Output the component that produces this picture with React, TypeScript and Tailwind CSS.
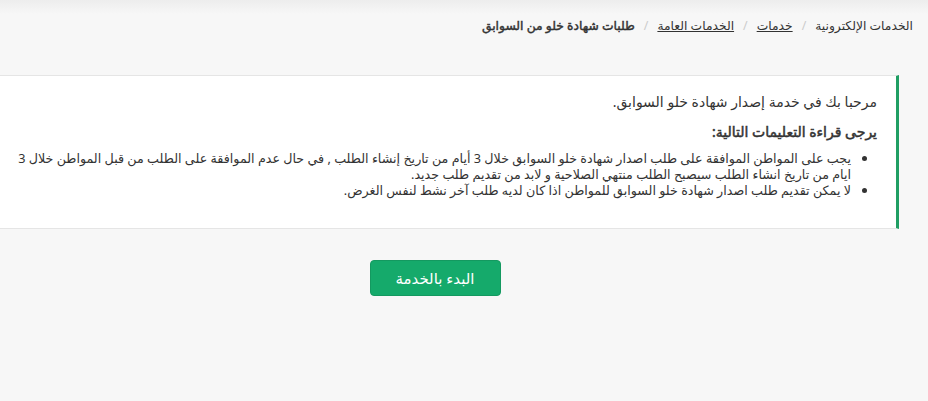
import React from 'react';

const crumbs = [
  { label: 'الخدمات الإلكترونية', link: false },
  { label: 'خدمات', link: true },
  { label: 'الخدمات العامة', link: true },
];

export default function App() {
  return (
    <div
      dir="rtl"
      className="w-[928px] h-[401px] overflow-hidden bg-[#f7f7f7] text-[#333]"
      style={{ fontFamily: '"Noto Sans", "DejaVu Sans", sans-serif' }}
    >
      {/* Breadcrumb */}
      <div className="h-[75px] pr-[15px] pt-[16px] bg-[linear-gradient(#ededed,#f7f7f7_14px)]">
        <ol className="flex items-center text-[12.3px] leading-[20px]">
          {crumbs.map((c) => (
            <li key={c.label} className="flex items-center">
              <span className={c.link ? 'underline' : ''}>{c.label}</span>
              <span className="px-[9px] text-[#ccc]">/</span>
            </li>
          ))}
          <li className="[-webkit-text-stroke:0.45px_#333]">طلبات شهادة خلو من السوابق</li>
        </ol>
      </div>

      {/* Instructions panel */}
      <div className="mr-[29px] bg-white border-t border-b border-[#e5e5e5] border-r-[3px] border-r-[#1f9e63] pr-[19px] pl-[8px] pt-[14px] pb-[30px]">
        <p className="text-[14px] leading-[24px]">مرحبا بك في خدمة إصدار شهادة خلو السوابق.</p>
        <p className="mt-[6px] text-[14px] leading-[24px] [-webkit-text-stroke:0.5px_#333]">يرجى قراءة التعليمات التالية:</p>
        <ul className="mt-[6px] list-disc pr-[26px] text-[12.7px] leading-[16px]">
          <li>
            يجب على المواطن الموافقة على طلب اصدار شهادة خلو السوابق خلال 3 أيام من تاريخ إنشاء الطلب , في حال عدم الموافقة على الطلب من قبل المواطن خلال 3 ايام من تاريخ انشاء الطلب سيصبح الطلب منتهي الصلاحية و لابد من تقديم طلب جديد.
          </li>
          <li>لا يمكن تقديم طلب اصدار شهادة خلو السوابق للمواطن اذا كان لديه طلب آخر نشط لنفس الغرض.</li>
        </ul>
      </div>

      {/* Start button */}
      <div className="flex justify-center pt-[31px] pr-[58px]">
        <button className="w-[131px] h-[36px] rounded-[4px] bg-[#15aa6b] border border-[#149960] text-white text-[15px]">
          البدء بالخدمة
        </button>
      </div>
    </div>
  );
}
